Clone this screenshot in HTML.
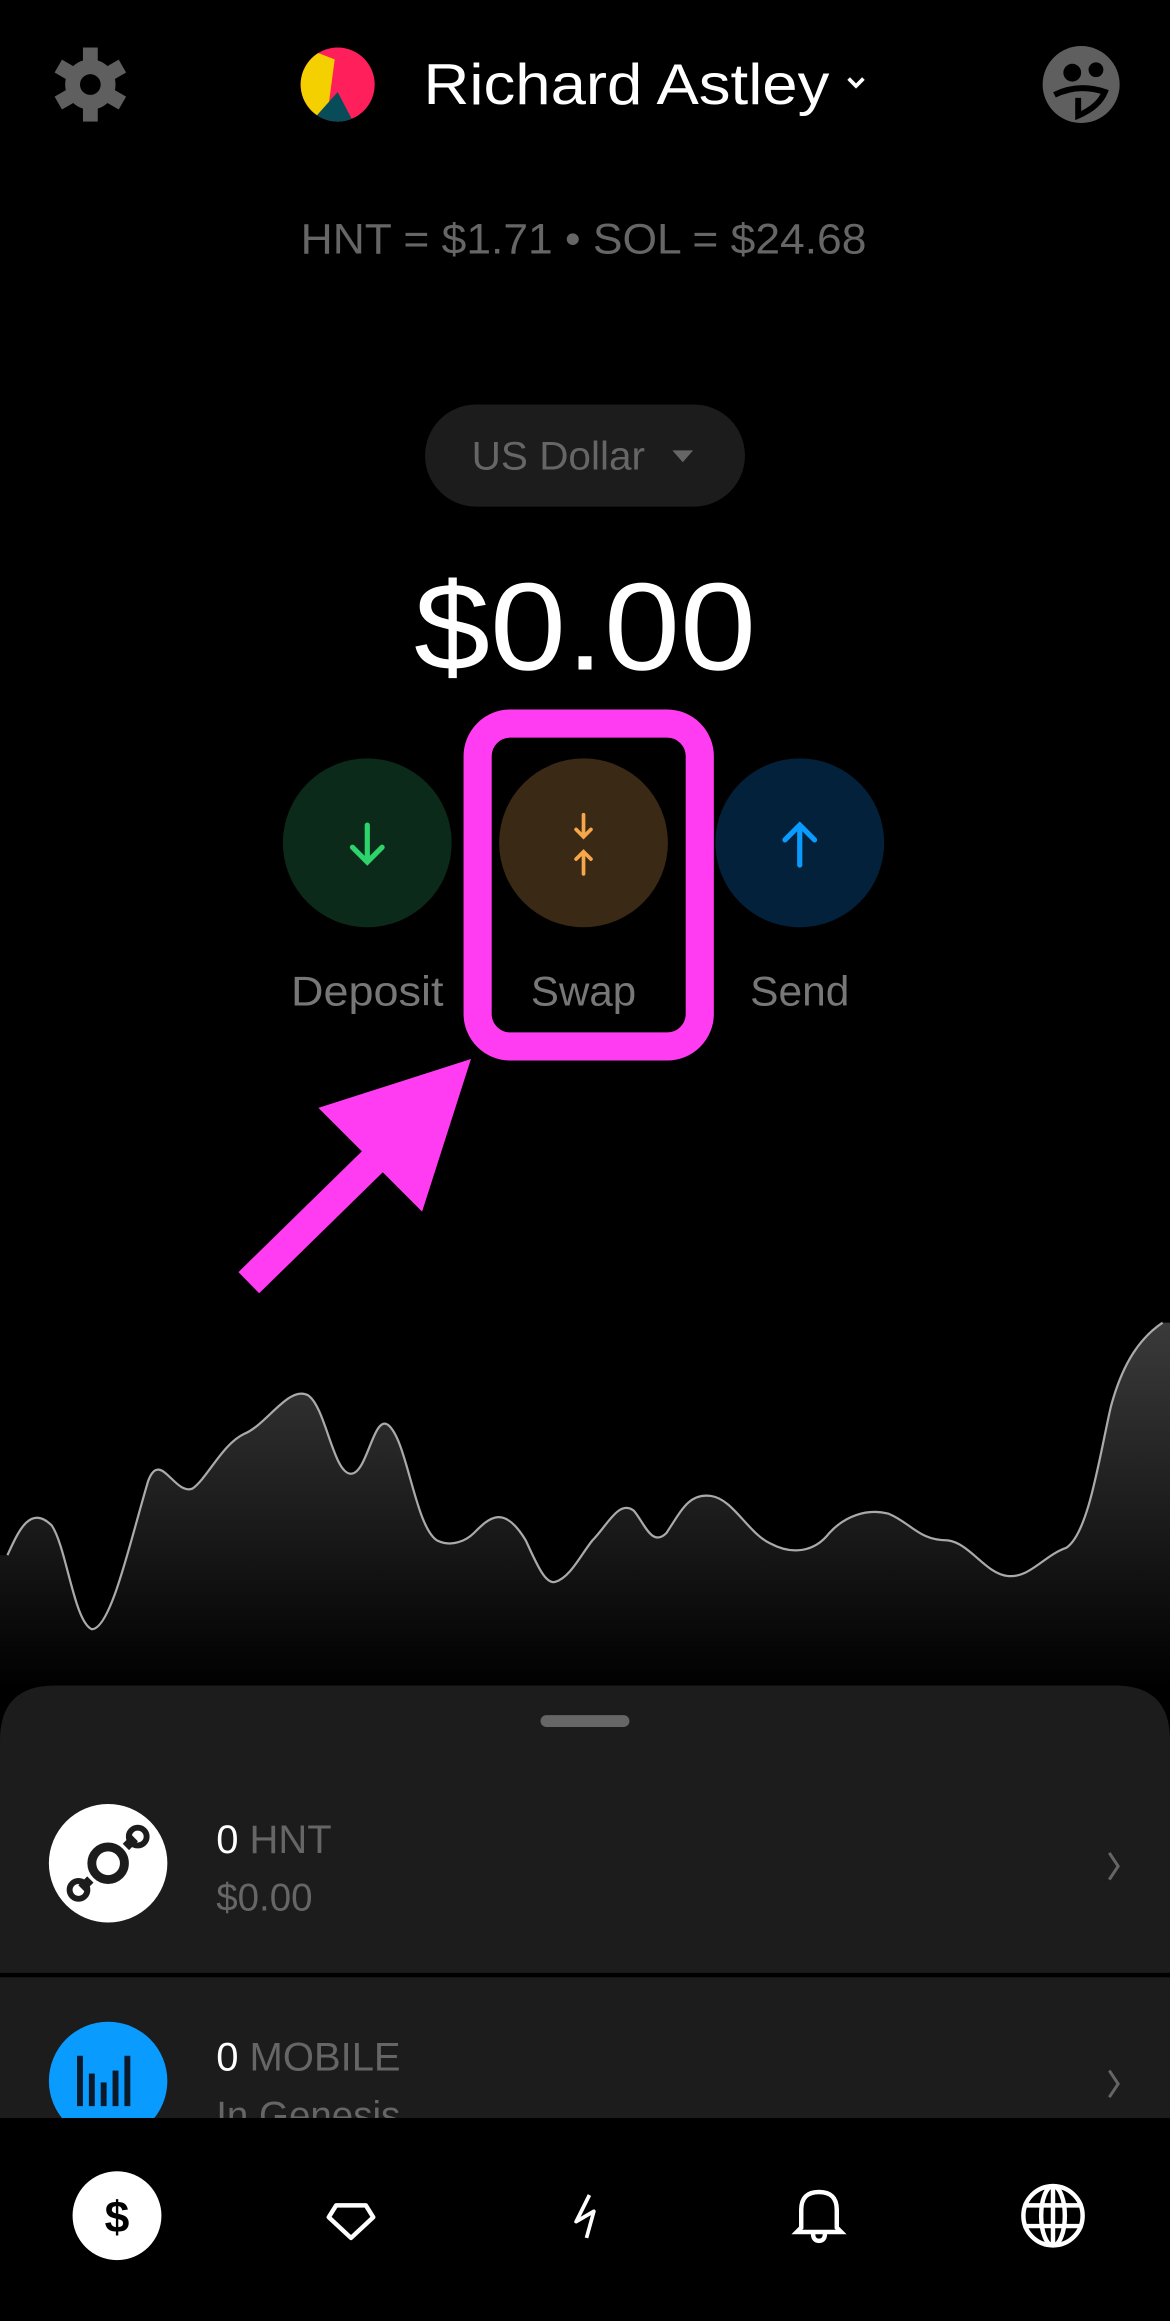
<!DOCTYPE html>
<html><head><meta charset="utf-8"><style>
html,body{margin:0;padding:0;background:#000;width:1170px;height:2321px;overflow:hidden}
svg{display:block}
text{font-family:"Liberation Sans",sans-serif}
</style></head><body>
<svg width="1170" height="2321" viewBox="0 0 790 1567" xmlns="http://www.w3.org/2000/svg">
<rect width="790" height="1567" fill="#000"/>
<g transform="translate(61,57)" fill="#5f5f5f">
<circle r="17"/>
<g><rect x="-5" y="-25" width="10" height="50"/><rect x="-5" y="-25" width="10" height="50" transform="rotate(60)"/><rect x="-5" y="-25" width="10" height="50" transform="rotate(120)"/></g>
<circle r="7" fill="#000"/>
</g>
<defs><clipPath id="av"><circle cx="228" cy="57" r="25"/></clipPath></defs>
<g clip-path="url(#av)">
<rect x="200" y="30" width="60" height="60" fill="#ff1f5a"/>
<polygon points="200,30 226,40 222,70 212,80 200,80" fill="#f5d000"/>
<polygon points="212,80 228,62 240,85 220,90" fill="#084c5a"/>
</g>
<text x="286" y="70" font-size="39" fill="#fff" textLength="274" lengthAdjust="spacingAndGlyphs">Richard Astley</text>
<path d="M573,53 L578,58 L583,53" stroke="#fff" stroke-width="2.5" fill="none"/>
<circle cx="730" cy="57" r="26" fill="#5f5f5f"/>
<circle cx="724" cy="49" r="6" fill="#000"/>
<circle cx="740" cy="47" r="5" fill="#000"/>
<path d="M712,64 Q728,56 746,62 Q742,72 728,78 L728,66" stroke="#000" stroke-width="4" fill="none"/>
<text x="394" y="171" font-size="29" fill="#666" text-anchor="middle" textLength="382" lengthAdjust="spacingAndGlyphs">HNT = $1.71 • SOL = $24.68</text>
<rect x="287" y="273" width="216" height="69" rx="34.5" fill="#1c1c1c"/>
<text x="377" y="317" font-size="27" fill="#666" text-anchor="middle" textLength="117" lengthAdjust="spacingAndGlyphs">US Dollar</text>
<polygon points="454,304 468,304 461,312" fill="#666"/>
<text x="395" y="452" font-size="84" fill="#fff" text-anchor="middle" textLength="231" lengthAdjust="spacingAndGlyphs">$0.00</text>
<circle cx="248" cy="569" r="57" fill="#0b2a1a"/>
<path d="M248,557 V582 M238,572 L248,582 L258,572" stroke="#2fd36b" stroke-width="3.5" fill="none" stroke-linecap="round"/>
<circle cx="394" cy="569" r="57" fill="#3a2914"/>
<path d="M394,550 V565 M389,560 L394,565 L399,560 M394,590 V575 M389,580 L394,575 L399,580" stroke="#f7a64a" stroke-width="2.5" fill="none" stroke-linecap="round"/>
<circle cx="540" cy="569" r="57" fill="#03213a"/>
<path d="M540,584 V557 M530,567 L540,557 L550,567" stroke="#0a9bff" stroke-width="3.5" fill="none" stroke-linecap="round"/>
<text x="248" y="679" font-size="28" fill="#777" text-anchor="middle" textLength="103" lengthAdjust="spacingAndGlyphs">Deposit</text>
<text x="394" y="679" font-size="28" fill="#777" text-anchor="middle" textLength="71" lengthAdjust="spacingAndGlyphs">Swap</text>
<text x="540" y="679" font-size="28" fill="#777" text-anchor="middle" textLength="67" lengthAdjust="spacingAndGlyphs">Send</text>
<rect x="322.5" y="488.5" width="150" height="218" rx="22" fill="none" stroke="#ff3cf2" stroke-width="19"/>
<polygon points="318,715 215,748 285,818" fill="#ff3cf2"/>
<path d="M168,866 L262,774" stroke="#ff3cf2" stroke-width="20"/>
<defs><linearGradient id="cg" x1="0" y1="0" x2="0" y2="1"><stop offset="0" stop-color="#3a3a3a"/><stop offset="1" stop-color="#000"/></linearGradient></defs>
<path d="M5,1050 C12,1035 20,1015 35,1030 C45,1045 50,1095 62,1100 C75,1100 88,1040 100,1000 C108,978 118,1010 130,1005 C140,998 150,975 165,968 C180,962 195,935 208,942 C220,950 225,995 237,995 C248,995 252,955 262,962 C275,972 280,1030 295,1040 C305,1045 315,1040 320,1035 C330,1025 340,1015 355,1040 C362,1055 368,1070 375,1068 C385,1065 392,1050 400,1040 C410,1030 418,1012 428,1020 C435,1028 440,1045 450,1035 C460,1020 465,1008 480,1010 C495,1012 505,1035 520,1042 C535,1050 550,1048 560,1035 C570,1024 585,1018 600,1022 C615,1028 620,1040 640,1040 C655,1042 665,1062 680,1064 C695,1066 705,1050 720,1045 C735,1035 742,985 750,950 C758,920 770,903 785,893 L790,893 L790,1140 L0,1140 L0,1050 Z" fill="url(#cg)"/>
<path d="M5,1050 C12,1035 20,1015 35,1030 C45,1045 50,1095 62,1100 C75,1100 88,1040 100,1000 C108,978 118,1010 130,1005 C140,998 150,975 165,968 C180,962 195,935 208,942 C220,950 225,995 237,995 C248,995 252,955 262,962 C275,972 280,1030 295,1040 C305,1045 315,1040 320,1035 C330,1025 340,1015 355,1040 C362,1055 368,1070 375,1068 C385,1065 392,1050 400,1040 C410,1030 418,1012 428,1020 C435,1028 440,1045 450,1035 C460,1020 465,1008 480,1010 C495,1012 505,1035 520,1042 C535,1050 550,1048 560,1035 C570,1024 585,1018 600,1022 C615,1028 620,1040 640,1040 C655,1042 665,1062 680,1064 C695,1066 705,1050 720,1045 C735,1035 742,985 750,950 C758,920 770,903 785,893" fill="none" stroke="#aaa" stroke-width="1.5"/>
<path d="M0,1175 Q0,1138 37,1138 L753,1138 Q790,1138 790,1175 L790,1430 L0,1430 Z" fill="#1c1c1c"/>
<rect x="365" y="1158" width="60" height="8" rx="4" fill="#666"/>
<circle cx="73" cy="1258" r="40" fill="#fff"/>
<g stroke="#1c1c1c" fill="none" stroke-width="6">
<circle cx="73" cy="1258" r="11"/>
<path d="M61,1269 L55,1275 M85,1247 L91,1241"/>
<circle cx="93" cy="1240" r="6" stroke-width="4"/><circle cx="53" cy="1276" r="6" stroke-width="4"/>
</g>
<text x="146" y="1251" font-size="27"><tspan fill="#fff">0</tspan><tspan fill="#666"> HNT</tspan></text>
<text x="146" y="1290" font-size="26" fill="#666">$0.00</text>
<path d="M749,1251 L755,1260 L749,1269" stroke="#666" stroke-width="2" fill="none"/>
<rect x="0" y="1332" width="790" height="3" fill="#000"/>
<circle cx="73" cy="1405" r="40" fill="#0a9bff"/>
<g fill="#0b1a2a"><rect x="52" y="1388" width="4" height="34"/><rect x="60" y="1400" width="4" height="22"/><rect x="68" y="1406" width="4" height="16"/><rect x="76" y="1398" width="4" height="24"/><rect x="84" y="1388" width="4" height="34"/></g>
<text x="146" y="1398" font-size="27"><tspan fill="#fff">0</tspan><tspan fill="#666"> MOBILE</tspan></text>
<text x="146" y="1437" font-size="26" fill="#666">In Genesis</text>
<path d="M749,1398 L755,1407 L749,1416" stroke="#666" stroke-width="2" fill="none"/>
<rect x="0" y="1430" width="790" height="137" fill="#000"/>
<circle cx="79" cy="1496" r="30" fill="#fff"/>
<text x="79" y="1507" font-size="30" font-weight="bold" fill="#000" text-anchor="middle">$</text>
<path d="M227,1489 L247,1489 L252,1497 L237,1511 L222,1497 Z" stroke="#fff" stroke-width="3" fill="none" stroke-linejoin="round"/>
<path d="M398,1482 L389,1500 L401,1493 L396,1511" stroke="#fff" stroke-width="2.5" fill="none" stroke-linejoin="round"/>
<path d="M541,1504 L541,1492 Q541,1480 553,1480 Q565,1480 565,1492 L565,1504 L568,1507 L538,1507 Z M549,1508 Q549,1513 553,1513 Q557,1513 557,1508" stroke="#fff" stroke-width="3" fill="none"/>
<g stroke="#fff" stroke-width="3" fill="none"><circle cx="711" cy="1496" r="20"/><ellipse cx="711" cy="1496" rx="8" ry="20"/><path d="M691,1489 H731 M691,1503 H731 M711,1476 V1516"/></g>
</svg>
</body></html>
